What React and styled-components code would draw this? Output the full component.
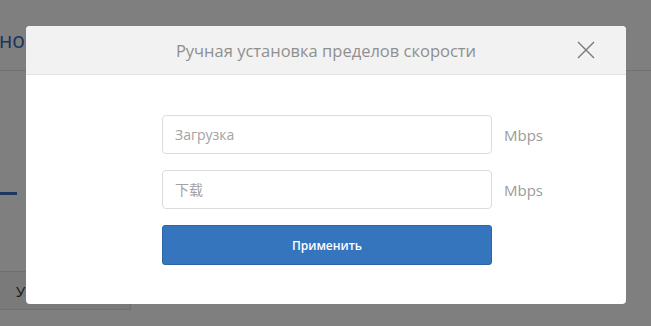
import React from "react";
import styled, { createGlobalStyle } from "styled-components";

const Global = createGlobalStyle`
  html, body { margin: 0; padding: 0; }
  body { font-family: "Open Sans", "Noto Sans CJK SC", sans-serif; background: #fff; }
  * { box-sizing: border-box; }
`;

const Page = styled.div`
  position: relative;
  width: 651px;
  height: 326px;
  overflow: hidden;
  background: #fff;
`;

const TopBar = styled.div`
  height: 71px;
  border-bottom: 1px solid #e4e4e4;
  display: flex;
  align-items: center;
`;

const TopText = styled.span`
  font-size: 21px;
  color: #3366b3;
  margin-left: -1px;
  margin-top: 10px;
  white-space: nowrap;
`;

const Content = styled.div`
  padding-top: 121px;
`;

const Dash = styled.div`
  width: 17px;
  height: 3px;
  background: #3a70b8;
`;

const BottomBox = styled.div`
  margin-top: 76px;
  width: 131px;
  height: 39px;
  border: 1px solid #dedede;
  border-left: none;
  background: #f4f4f4;
  display: flex;
  align-items: center;
  padding-left: 16px;
  font-size: 15px;
  color: #333;
`;

const Overlay = styled.div`
  position: absolute;
  inset: 0;
  background: rgba(0, 0, 0, 0.5);
  display: flex;
  justify-content: center;
  align-items: flex-start;
  padding-top: 26px;
  padding-left: 1px;
`;

const Modal = styled.div`
  width: 600px;
  height: 278px;
  background: #fff;
  border-radius: 4px;
  overflow: hidden;
  display: flex;
  flex-direction: column;
`;

const Header = styled.div`
  position: relative;
  height: 49px;
  background: #f2f2f2;
  border-bottom: 1px solid #e3e3e3;
  display: flex;
  align-items: center;
  justify-content: center;
`;

const Title = styled.h3`
  margin: 0;
  font-size: 16.5px;
  font-weight: 400;
  color: #8f8f8f;
`;

const Close = styled.button`
  position: absolute;
  right: 31px;
  top: 15px;
  width: 18px;
  height: 18px;
  padding: 0;
  border: none;
  background: none;
  cursor: pointer;
  display: flex;
`;

const Body = styled.div`
  padding-top: 40px;
  display: flex;
  flex-direction: column;
  align-items: flex-start;
  padding-left: 136px;
  gap: 16px;
`;

const Row = styled.div`
  display: flex;
  align-items: center;
  gap: 12px;
`;

const Input = styled.input`
  width: 330px;
  height: 39px;
  border: 1px solid #dcdcdc;
  border-radius: 4px;
  padding: 0 12px;
  font-family: "Open Sans", "Noto Sans CJK SC", sans-serif;
  font-size: 14px;
  color: #555;
  outline: none;
  &::placeholder { color: #a3a3a3; }
`;

const Unit = styled.span`
  font-size: 15px;
  color: #9b9b9b;
`;

const Button = styled.button`
  width: 330px;
  height: 40px;
  background: #3575bd;
  border: 1px solid #2b64a8;
  border-radius: 3px;
  color: #fff;
  font-family: "Open Sans", sans-serif;
  font-size: 12px;
  font-weight: 600;
  cursor: pointer;
`;

export default function App() {
  return (
    <>
      <Global />
      <Page>
        <TopBar>
          <TopText>ной</TopText>
        </TopBar>
        <Content>
          <Dash />
          <BottomBox>У</BottomBox>
        </Content>
        <Overlay>
          <Modal>
            <Header>
              <Title>Ручная установка пределов скорости</Title>
              <Close aria-label="close">
                <svg width="18" height="18" viewBox="0 0 18 18">
                  <path d="M1 1L17 17M17 1L1 17" stroke="#7a7a7a" strokeWidth="1.4" fill="none" />
                </svg>
              </Close>
            </Header>
            <Body>
              <Row>
                <Input placeholder="Загрузка" />
                <Unit>Mbps</Unit>
              </Row>
              <Row>
                <Input placeholder="下载" />
                <Unit>Mbps</Unit>
              </Row>
              <Button>Применить</Button>
            </Body>
          </Modal>
        </Overlay>
      </Page>
    </>
  );
}
